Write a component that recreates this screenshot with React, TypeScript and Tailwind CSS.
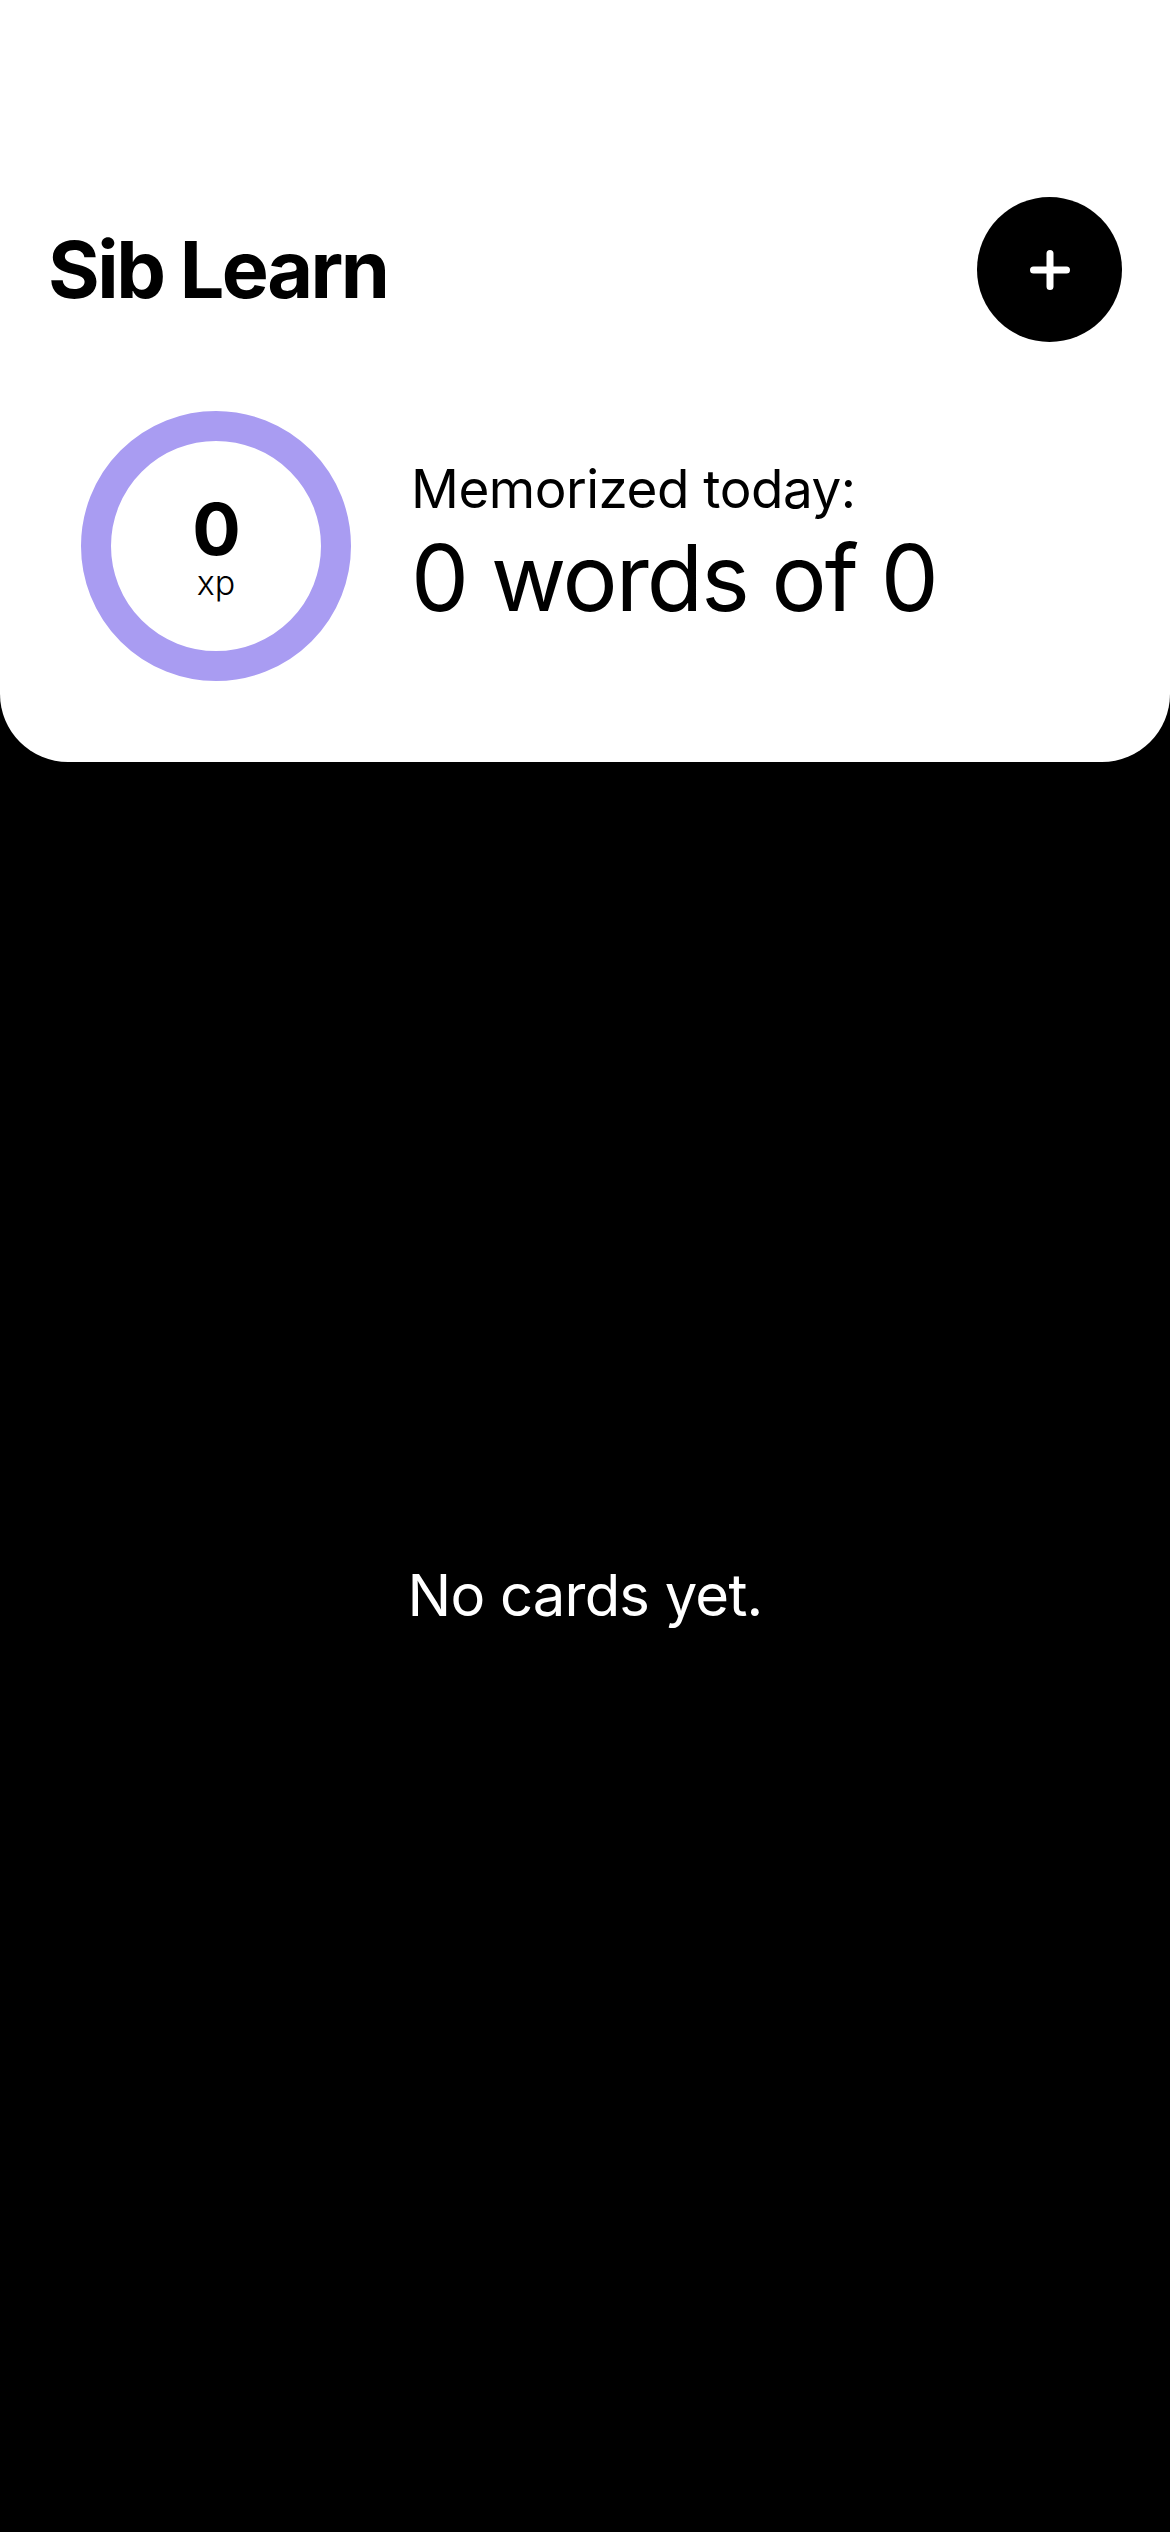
import React from 'react';

const font = { fontFamily: 'Inter, "Noto Sans", sans-serif' };

const ProgressRing: React.FC<{ xp: number }> = ({ xp }) => {
  return (
    <div className="relative w-[270px] h-[270px] shrink-0">
      <div className="absolute inset-0 rounded-full border-[30px] border-[#a99cf2]" />
      <div className="absolute inset-0 flex flex-col items-center justify-center">
        <span className="text-[72px] font-bold leading-[0.8] tracking-[-1px] text-black mt-[8px]">{xp}</span>
        <span className="text-[34px] font-light leading-none text-black mt-[9px]">xp</span>
      </div>
    </div>
  );
};

export default function App() {
  const memorized = 0;
  const total = 0;
  const cards: string[] = [];

  return (
    <div className="w-[1170px] min-h-[2532px] bg-black" style={font}>
      <div className="bg-white rounded-b-[68px] pt-[197px] pb-[81px]">
        <div className="flex items-center justify-between pl-[48px] pr-[48px] h-[145px]">
          <h1 className="text-[79px] font-bold tracking-[-2.5px] text-black leading-none">Sib Learn</h1>
          <button className="w-[145px] h-[145px] rounded-full bg-black flex items-center justify-center">
            <svg width="40" height="40" viewBox="0 0 40 40" fill="none">
              <path d="M20 3.5v33M3.5 20h33" stroke="white" strokeWidth="7" strokeLinecap="round" />
            </svg>
          </button>
        </div>
        <div className="flex items-center mt-[69px] pl-[81px]">
          <ProgressRing xp={0} />
          <div className="ml-[60px] flex flex-col mt-[-6px]">
            <span className="text-[53px] leading-none tracking-[-0.5px] text-black">Memorized today:</span>
            <span className="text-[92px] leading-none tracking-[-2px] text-black mt-[16px]">
              {memorized} words of {total}
            </span>
          </div>
        </div>
      </div>
      <div className="h-[1769px] flex items-center justify-center pb-[104px]">
        {cards.length === 0 && (
          <p className="text-[58px] text-white tracking-[-0.8px] leading-none">No cards yet.</p>
        )}
      </div>
    </div>
  );
}
